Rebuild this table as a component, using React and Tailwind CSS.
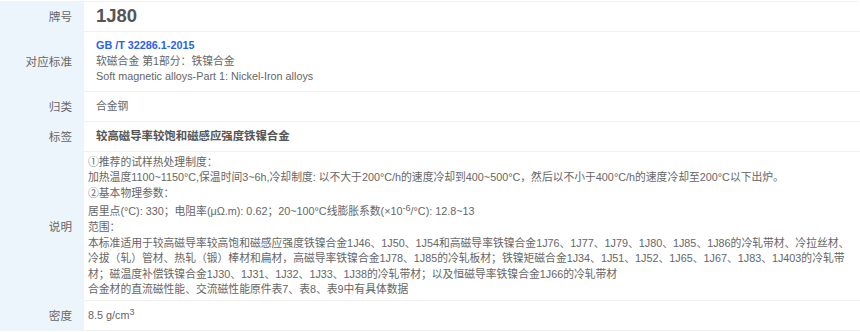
import React from 'react';

const font = { fontFamily: '"Liberation Sans", "Noto Sans CJK SC", sans-serif' };

const Row = ({ label, children, valueClass = 'pl-3', height = 'min-h-[29px]' }) => (
    <>
        <div className="bg-[#edf5fc] flex items-center justify-end pr-3 text-[11.6px] text-[#666]">
            {label}
        </div>
        <div className={`bg-white border-b border-[#f1f1f1] flex flex-col justify-center ${height} ${valueClass}`}>
            {children}
        </div>
    </>
);

export default function App() {
    return (
        <div className="bg-white w-[860px] h-[332px] overflow-hidden" style={font}>
            <div className="mt-px w-[859px] border-t border-r border-[#f1f1f1] grid grid-cols-[84px_1fr]">
                {/* 牌号 */}
                <Row label="牌号" height="h-[30px]">
                    <span className="text-[18.5px] font-bold text-[#555] leading-none">1J80</span>
                </Row>

                {/* 对应标准 */}
                <Row label="对应标准" height="h-[60px]">
                    <div className="text-[10.8px] leading-[15.4px] text-[#666]">
                        <div className="font-bold text-[#2b5ff0]">GB /T 32286.1-2015</div>
                        <div>软磁合金 第1部分：铁镍合金</div>
                        <div>Soft magnetic alloys-Part 1: Nickel-Iron alloys</div>
                    </div>
                </Row>

                <Row label="归类" height="h-[30px]">
                    <span className="text-[10.8px] text-[#666]">合金钢</span>
                </Row>

                <Row label="标签" height="h-[30px]">
                    <span className="text-[11.4px] font-bold text-[#555]">较高磁导率较饱和磁感应强度铁镍合金</span>
                </Row>

                {/* 说明 */}
                <Row label="说明" valueClass="pl-1 pr-3 py-1" height="h-[149px]">
                    <div className="text-[10.8px] leading-[15.5px] text-[#666] whitespace-nowrap">
                        <div>①推荐的试样热处理制度：</div>
                        <div>加热温度1100~1150°C,保温时间3~6h,冷却制度: 以不大于200°C/h的速度冷却到400~500°C，然后以不小于400°C/h的速度冷却至200°C以下出炉。</div>
                        <div>②基本物理参数：</div>
                        <div className="leading-[18px] pt-px">居里点(°C): 330；电阻率(μΩ.m): 0.62；20~100°C线膨胀系数(×10<sup className="text-[9px]">-6</sup>/°C): 12.8~13</div>
                        <div>范围：</div>
                        <div>本标准适用于较高磁导率较高饱和磁感应强度铁镍合金1J46、1J50、1J54和高磁导率铁镍合金1J76、1J77、1J79、1J80、1J85、1J86的冷轧带材、冷拉丝材、</div>
                        <div>冷拔（轧）管材、热轧（锻）棒材和扁材，高磁导率铁镍合金1J78、1J85的冷轧板材；铁镍矩磁合金1J34、1J51、1J52、1J65、1J67、1J83、1J403的冷轧带</div>
                        <div>材；磁温度补偿铁镍合金1J30、1J31、1J32、1J33、1J38的冷轧带材；以及恒磁导率铁镍合金1J66的冷轧带材</div>
                        <div>合金材的直流磁性能、交流磁性能原件表7、表8、表9中有具体数据</div>
                    </div>
                </Row>

                <Row label="密度" valueClass="pl-1" height="h-[30px]">
                    <span className="text-[10.8px] text-[#666]">8.5 g/cm<sup className="text-[9px]">3</sup></span>
                </Row>
            </div>
        </div>
    );
}
